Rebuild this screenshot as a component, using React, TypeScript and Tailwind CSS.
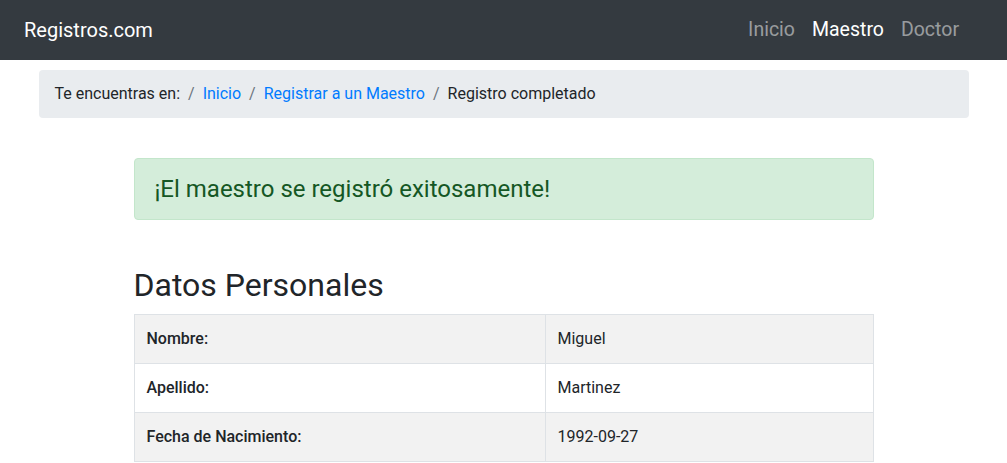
import React from "react";

const rows = [
  { label: "Nombre:", value: "Miguel" },
  { label: "Apellido:", value: "Martinez" },
  { label: "Fecha de Nacimiento:", value: "1992-09-27" },
];

export default function App() {
  return (
    <div
      className="min-h-screen bg-white text-[#212529]"
      style={{ fontFamily: "Roboto, 'Liberation Sans', sans-serif" }}
    >
      {/* Navbar */}
      <nav className="flex h-[60px] items-center justify-between bg-[#343a40] pl-6 pr-[48px]">
        <a className="text-[20px] text-white">Registros.com</a>
        <ul className="flex items-center gap-[17px] text-[19.5px]">
          <li className="text-white/50">Inicio</li>
          <li className="text-white">Maestro</li>
          <li className="text-white/50">Doctor</li>
        </ul>
      </nav>

      <div className="mx-auto w-[930px]">
        {/* Breadcrumb */}
        <ol className="mt-[10px] flex h-[48px] items-center rounded bg-[#e9ecef] px-4 text-[16px]">
          <li>Te encuentras en:</li>
          <li className="px-2 text-[#6c757d]">/</li>
          <li className="text-[#007bff]">Inicio</li>
          <li className="px-2 text-[#6c757d]">/</li>
          <li className="text-[#007bff]">Registrar a un Maestro</li>
          <li className="px-2 text-[#6c757d]">/</li>
          <li>Registro completado</li>
        </ol>

        <div className="mx-auto w-[740px]">
          {/* Alert */}
          <div className="mt-[40px] flex h-[62px] items-center rounded border border-[#c3e6cb] bg-[#d4edda] px-5 text-[24px] text-[#155724]">
            ¡El maestro se registró exitosamente!
          </div>

          <h2 className="mt-[46px] mb-[10px] text-[32px] leading-[38px]">Datos Personales</h2>

          <table className="w-full border-collapse text-[16px]">
            <tbody>
              {rows.map((r, i) => (
                <tr key={r.label} className={i % 2 === 0 ? "bg-[#f2f2f2]" : "bg-white"}>
                  <th className="h-[49px] w-[411px] border border-[#dee2e6] px-3 text-left font-medium">
                    {r.label}
                  </th>
                  <td className="h-[49px] border border-[#dee2e6] px-3">{r.value}</td>
                </tr>
              ))}
            </tbody>
          </table>
        </div>
      </div>
    </div>
  );
}
